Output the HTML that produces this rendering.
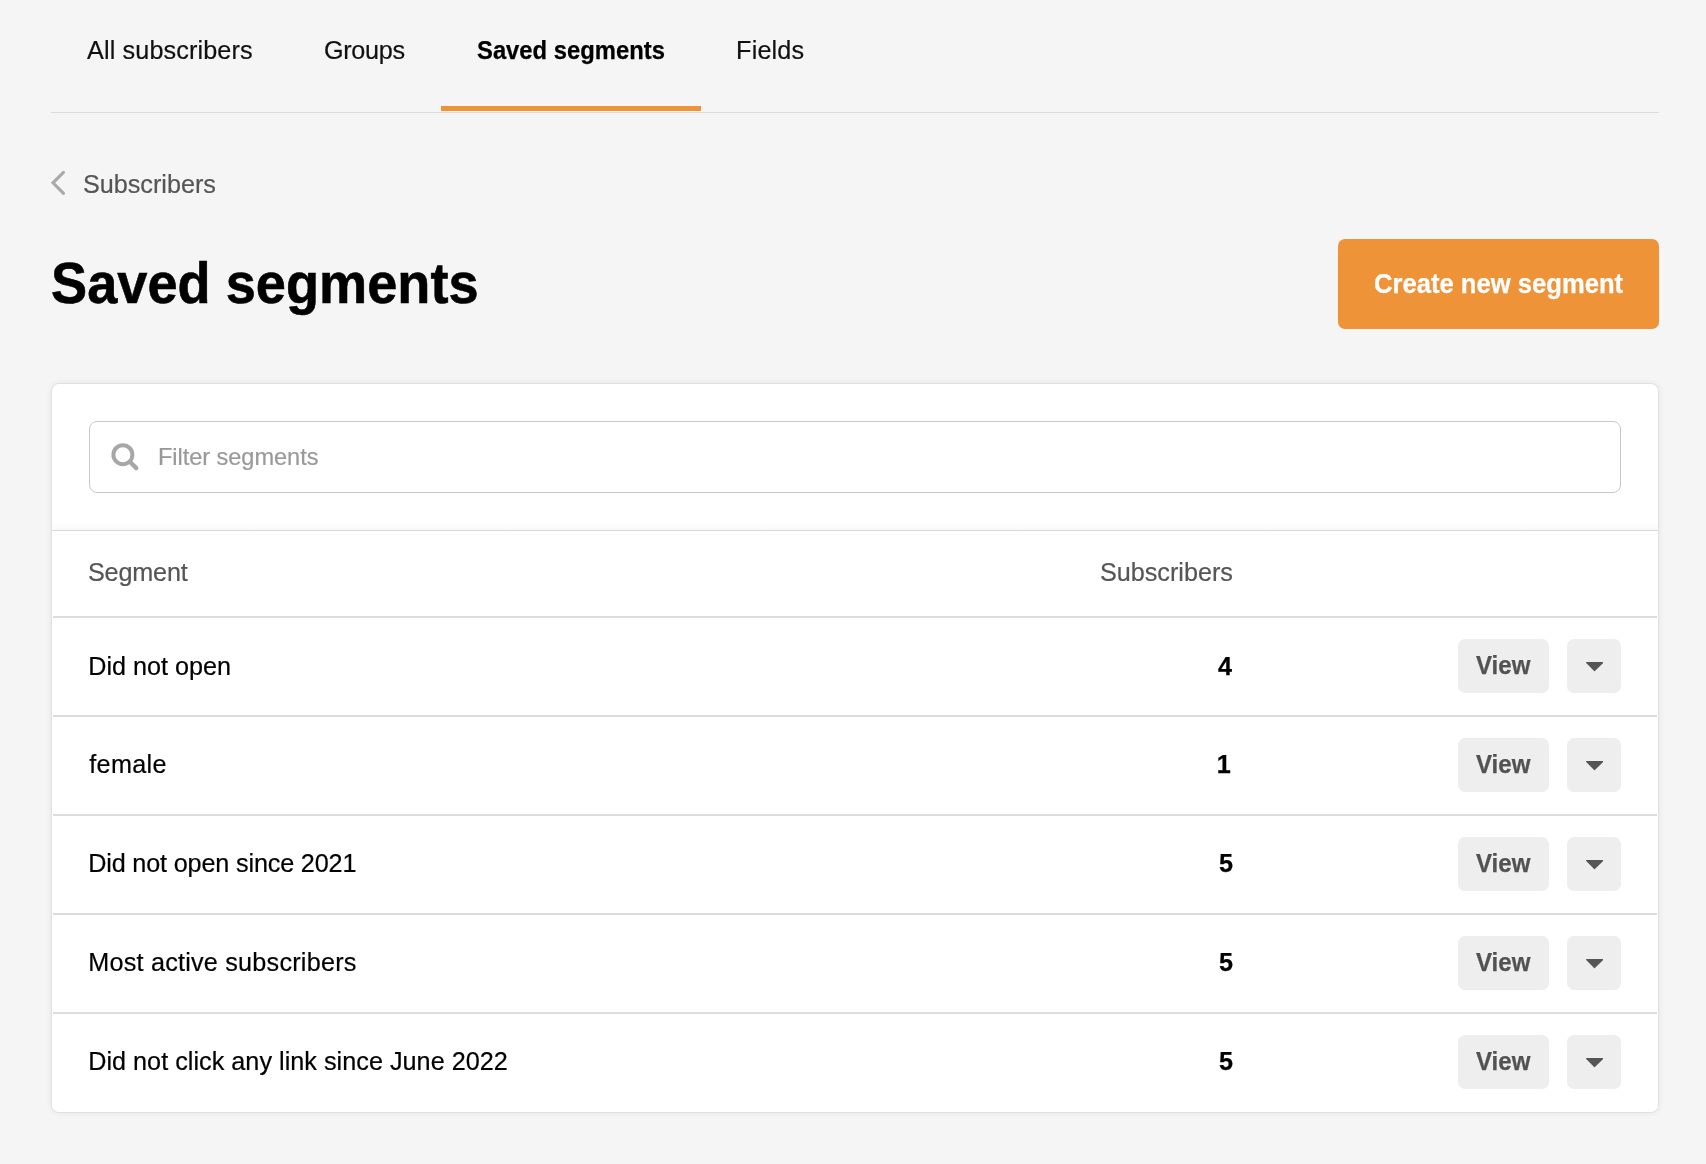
<!DOCTYPE html>
<html lang="en">
<head>
<meta charset="utf-8">
<title>Saved segments</title>
<style>
*{box-sizing:border-box;margin:0;padding:0}
html,body{width:1706px;height:1164px;overflow:hidden;background:#f5f5f5}
body{font-family:"Liberation Sans",sans-serif;color:#000;position:relative}
.page{position:absolute;left:0;top:0;width:1706px;height:1164px;will-change:transform}
.t{position:absolute;white-space:nowrap;line-height:1;transform-origin:0 0}
.tabline{position:absolute;left:51px;top:112px;width:1608px;height:1px;background:#dcdcdc}
.underline{position:absolute;left:441px;top:106px;width:260px;height:5px;background:#ef9338}
.cta{position:absolute;left:1338px;top:239px;width:321px;height:90px;border-radius:7px;background:#ef9338}
.card{position:absolute;left:52px;top:384px;width:1606px;height:728px;background:#fff;border-radius:7px;box-shadow:0 0 0 1px rgba(0,0,0,.045),0 0 6px rgba(0,0,0,.10)}
.search{position:absolute;left:89px;top:421px;width:1532px;height:72px;border:1px solid #c8c8c8;border-radius:8px;background:#fff}
.hr{position:absolute;left:53px;width:1604px;height:2px;background:#dcdcdc}
.hr1{position:absolute;left:52px;top:530px;width:1606px;height:1px;background:#d9d9d9}
.hr1:before{content:"";position:absolute;left:0;top:-8px;width:100%;height:8px;background:linear-gradient(rgba(0,0,0,0),rgba(0,0,0,.022))}
.btn{position:absolute;height:54px;border-radius:7px;background:#eee}
.icons{position:absolute;left:0;top:0;pointer-events:none}
</style>
</head>
<body>
<div class="page">
<header>
<nav>
<div class="t" style="left:87.10px;top:38px;font-size:25.2px;letter-spacing:0.121px;color:#111;-webkit-text-stroke:0.2px #111;">All subscribers</div>
<div class="t" style="left:324.00px;top:38px;font-size:25.2px;letter-spacing:-0.32px;color:#111;-webkit-text-stroke:0.2px #111;">Groups</div>
<div class="t" style="left:477.05px;top:38px;font-size:25.2px;letter-spacing:0.0px;color:#000;font-weight:bold;transform:scaleX(0.9452);-webkit-text-stroke:0.25px #000;">Saved segments</div>
<div class="t" style="left:736.10px;top:38px;font-size:25.2px;letter-spacing:0.16px;color:#111;-webkit-text-stroke:0.2px #111;">Fields</div>
<div class="tabline"></div><div class="underline"></div>
</nav>
</header>
<main>
<div class="t" style="left:83.00px;top:172px;font-size:25.2px;letter-spacing:-0.01px;color:#555;-webkit-text-stroke:0.2px #555;">Subscribers</div>
<h1 class="t" style="left:50.93px;top:254px;font-size:58px;letter-spacing:0.0px;color:#000;font-weight:bold;transform:scaleX(0.934);-webkit-text-stroke:0.6px #000;">Saved segments</h1>
<div class="cta"></div><div class="t" style="left:1373.95px;top:271px;font-size:27px;letter-spacing:0.0px;color:#fff;font-weight:bold;transform:scaleX(0.9487);-webkit-text-stroke:0.25px #fff;">Create new segment</div>
<section>
<div class="card"></div>
<div class="search"></div>
<div class="t" style="left:157.90px;top:446px;font-size:23.6px;letter-spacing:-0.05px;color:#999;-webkit-text-stroke:0.2px #999;">Filter segments</div>
<div class="hr1"></div>
<div class="thead"><div class="t" style="left:88.00px;top:560px;font-size:25.2px;letter-spacing:-0.183px;color:#555;-webkit-text-stroke:0.2px #555;">Segment</div><div class="t" style="left:1100.00px;top:560px;font-size:25.2px;letter-spacing:-0.01px;color:#555;-webkit-text-stroke:0.2px #555;">Subscribers</div></div>
<div class="hr" style="top:616px"></div>
<div class="row">
<div class="t" style="left:88.20px;top:654px;font-size:25.2px;letter-spacing:0.009px;color:#000;-webkit-text-stroke:0.2px #000;">Did not open</div><div class="t" style="left:1218.00px;top:654px;font-size:25.2px;letter-spacing:0.0px;color:#000;font-weight:bold;-webkit-text-stroke:0.25px #000;">4</div>
<div class="btn" style="left:1458px;top:639px;width:91px"></div><div class="t" style="left:1476.10px;top:653px;font-size:25.2px;letter-spacing:0.0px;color:#525252;font-weight:bold;transform:scaleX(0.9544);-webkit-text-stroke:0.25px #525252;">View</div>
<div class="btn" style="left:1567px;top:639px;width:54px"></div>
</div>
<div class="hr" style="top:715px"></div>
<div class="row">
<div class="t" style="left:89.20px;top:752px;font-size:25.2px;letter-spacing:0.36px;color:#000;-webkit-text-stroke:0.2px #000;">female</div><div class="t" style="left:1216.70px;top:752px;font-size:25.2px;letter-spacing:0.0px;color:#000;font-weight:bold;-webkit-text-stroke:0.25px #000;">1</div>
<div class="btn" style="left:1458px;top:738px;width:91px"></div><div class="t" style="left:1476.10px;top:752px;font-size:25.2px;letter-spacing:0.0px;color:#525252;font-weight:bold;transform:scaleX(0.9544);-webkit-text-stroke:0.25px #525252;">View</div>
<div class="btn" style="left:1567px;top:738px;width:54px"></div>
</div>
<div class="hr" style="top:814px"></div>
<div class="row">
<div class="t" style="left:88.20px;top:851px;font-size:25.2px;letter-spacing:-0.155px;color:#000;-webkit-text-stroke:0.2px #000;">Did not open since 2021</div><div class="t" style="left:1218.90px;top:851px;font-size:25.2px;letter-spacing:0.0px;color:#000;font-weight:bold;-webkit-text-stroke:0.25px #000;">5</div>
<div class="btn" style="left:1458px;top:837px;width:91px"></div><div class="t" style="left:1476.10px;top:851px;font-size:25.2px;letter-spacing:0.0px;color:#525252;font-weight:bold;transform:scaleX(0.9544);-webkit-text-stroke:0.25px #525252;">View</div>
<div class="btn" style="left:1567px;top:837px;width:54px"></div>
</div>
<div class="hr" style="top:913px"></div>
<div class="row">
<div class="t" style="left:88.20px;top:950px;font-size:25.2px;letter-spacing:0.227px;color:#000;-webkit-text-stroke:0.2px #000;">Most active subscribers</div><div class="t" style="left:1218.90px;top:950px;font-size:25.2px;letter-spacing:0.0px;color:#000;font-weight:bold;-webkit-text-stroke:0.25px #000;">5</div>
<div class="btn" style="left:1458px;top:936px;width:91px"></div><div class="t" style="left:1476.10px;top:950px;font-size:25.2px;letter-spacing:0.0px;color:#525252;font-weight:bold;transform:scaleX(0.9544);-webkit-text-stroke:0.25px #525252;">View</div>
<div class="btn" style="left:1567px;top:936px;width:54px"></div>
</div>
<div class="hr" style="top:1012px"></div>
<div class="row">
<div class="t" style="left:88.20px;top:1049px;font-size:25.2px;letter-spacing:0.027px;color:#000;-webkit-text-stroke:0.2px #000;">Did not click any link since June 2022</div><div class="t" style="left:1218.90px;top:1049px;font-size:25.2px;letter-spacing:0.0px;color:#000;font-weight:bold;-webkit-text-stroke:0.25px #000;">5</div>
<div class="btn" style="left:1458px;top:1035px;width:91px"></div><div class="t" style="left:1476.10px;top:1049px;font-size:25.2px;letter-spacing:0.0px;color:#525252;font-weight:bold;transform:scaleX(0.9544);-webkit-text-stroke:0.25px #525252;">View</div>
<div class="btn" style="left:1567px;top:1035px;width:54px"></div>
</div>
</section>
</main>
<svg class="icons" width="1706" height="1164" viewBox="0 0 1706 1164">
<path d="M63.5 172.4 L53 182.85 L63.5 193.3" fill="none" stroke="#a9a9a9" stroke-width="3.1" stroke-linecap="round" stroke-linejoin="miter"/>
<circle cx="122.9" cy="454.7" r="9.5" fill="none" stroke="#a7a7a7" stroke-width="4"/><path d="M129.9 461.8 L136.2 468.1" fill="none" stroke="#a7a7a7" stroke-width="4.4" stroke-linecap="round"/>
<path d="M1586.6 662.7 L1602.5 662.7 L1594.5 670.6 Z" fill="#555" stroke="#555" stroke-width="1.2" stroke-linejoin="round"/>
<path d="M1586.6 761.7 L1602.5 761.7 L1594.5 769.6 Z" fill="#555" stroke="#555" stroke-width="1.2" stroke-linejoin="round"/>
<path d="M1586.6 860.7 L1602.5 860.7 L1594.5 868.6 Z" fill="#555" stroke="#555" stroke-width="1.2" stroke-linejoin="round"/>
<path d="M1586.6 959.7 L1602.5 959.7 L1594.5 967.6 Z" fill="#555" stroke="#555" stroke-width="1.2" stroke-linejoin="round"/>
<path d="M1586.6 1058.7 L1602.5 1058.7 L1594.5 1066.6 Z" fill="#555" stroke="#555" stroke-width="1.2" stroke-linejoin="round"/>
</svg>
</div>
</body>
</html>
